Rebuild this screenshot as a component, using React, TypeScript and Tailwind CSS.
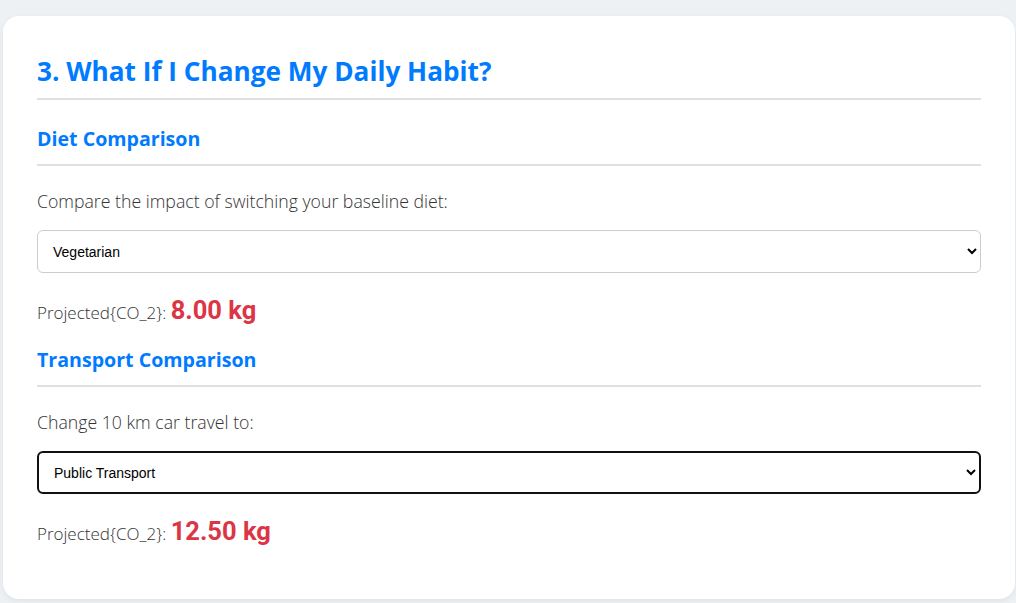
export default function App() {
  return (
    <div className="min-h-screen bg-[#eef1f4] pt-4 pl-[3px] pr-px" style={{ fontFamily: '"Open Sans", "Noto Sans", sans-serif' }}>
      <div className="bg-white rounded-2xl shadow-[0_2px_6px_rgba(0,0,0,0.06)] px-[34px] pt-[38px] pb-[51px]">
        <h2 className="text-[26.2px] leading-[34px] font-bold text-[#007bff] pb-[10px] border-b-2 border-[#e0e0e0]">
          3. What If I Change My Daily Habit?
        </h2>

        <Section
          className="mt-[26px]"
          title="Diet Comparison"
          label="Compare the impact of switching your baseline diet:"
          options={['Vegetarian', 'Vegan', 'Omnivore', 'Heavy Meat']}
          value="8.00 kg"
        />
        <Section
          className="mt-[20px]"
          title="Transport Comparison"
          label="Change 10 km car travel to:"
          options={['Public Transport', 'Bicycle', 'Walking', 'Electric Car']}
          value="12.50 kg"
          focused
        />
      </div>
    </div>
  );
}

function Section({
  className,
  title,
  label,
  options,
  value,
  focused,
}: {
  className: string;
  title: string;
  label: string;
  options: string[];
  value: string;
  focused?: boolean;
}) {
  return (
    <div className={className}>
      <h3 className="text-[19.6px] leading-[26px] font-bold text-[#007bff] pb-[12px] border-b-2 border-[#e0e0e0]">
        {title}
      </h3>
      <p className="mt-[22px] text-[17.7px] leading-[26px] font-light text-[#333]">{label}</p>
      <select
        defaultValue={options[0]}
        className={
          'mt-[16px] block w-full h-[43px] rounded-md bg-white pl-[11px] pr-2 text-[14px] text-black ' +
          (focused ? 'border-2 border-[#111]' : 'border border-[#ccc]')
        }
        style={{ fontFamily: '"Liberation Sans", Arial, sans-serif' }}
      >
        {options.map((o) => (
          <option key={o}>{o}</option>
        ))}
      </select>
      <p className="mt-[23px] text-[17px] leading-[28px] font-light text-[#333]">
        Projected{'{'}CO_2{'}'}:{' '}
        <span className="text-[25.5px] font-bold text-[#dc3545]" style={{ fontFamily: 'Roboto, sans-serif' }}>
          {value}
        </span>
      </p>
    </div>
  );
}
